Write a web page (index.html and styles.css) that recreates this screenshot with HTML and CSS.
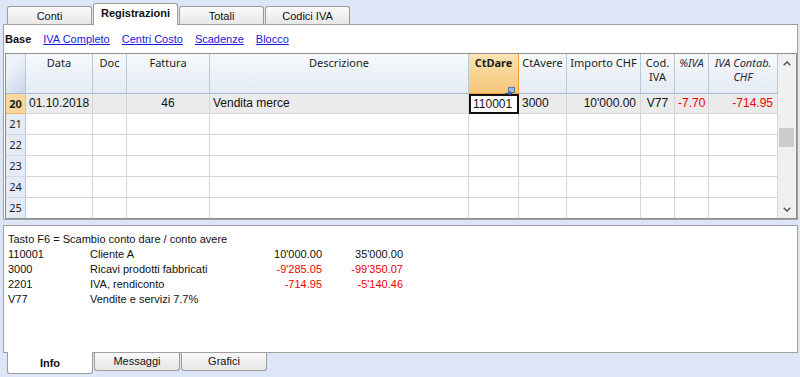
FILE: index.html
```html
<!DOCTYPE html>
<html>
<head>
<meta charset="utf-8">
<link rel="stylesheet" href="styles.css">
</head>
<body>
<div class="tabs-top">
  <div class="tab">Conti</div>
  <div class="tab active">Registrazioni</div>
  <div class="tab">Totali</div>
  <div class="tab">Codici IVA</div>
</div>
<div class="panel main">
  <div class="views">
    <b>Base</b>
    <a>IVA Completo</a>
    <a>Centri Costo</a>
    <a>Scadenze</a>
    <a>Blocco</a>
  </div>
  <div class="grid">
    <div class="table">
      <div class="r hr">
        <div class="corner"></div>
        <div>Data</div>
        <div>Doc</div>
        <div>Fattura</div>
        <div>Descrizione</div>
        <div class="sel">CtDare<svg class="mini" width="10" height="8" viewBox="0 0 10 8"><rect x="3.5" y="0.5" width="6" height="5" fill="#9fb6d6" stroke="#5a7aa8"/><path d="M0 6.5H6" stroke="#3b5f95" stroke-width="1.2"/><path d="M4 4.5L6.5 6.5L4 8" fill="none" stroke="#3b5f95" stroke-width="1.2"/></svg></div>
        <div>CtAvere</div>
        <div>Importo CHF</div>
        <div>Cod.<br>IVA</div>
        <div class="it">%IVA</div>
        <div class="it">IVA Contab.<br>CHF</div>
      </div>
      <div class="r br cur-row">
        <div class="rh on">20</div>
        <div>01.10.2018</div>
        <div></div>
        <div class="c">46</div>
        <div>Vendita merce</div>
        <div class="cur">110001</div>
        <div>3000</div>
        <div class="n">10'000.00</div>
        <div class="c">V77</div>
        <div class="n red">-7.70</div>
        <div class="n red">-714.95</div>
      </div>
      <div class="r br"><div class="rh">21</div><div></div><div></div><div></div><div></div><div></div><div></div><div></div><div></div><div></div><div></div></div>
      <div class="r br"><div class="rh">22</div><div></div><div></div><div></div><div></div><div></div><div></div><div></div><div></div><div></div><div></div></div>
      <div class="r br"><div class="rh">23</div><div></div><div></div><div></div><div></div><div></div><div></div><div></div><div></div><div></div><div></div></div>
      <div class="r br"><div class="rh">24</div><div></div><div></div><div></div><div></div><div></div><div></div><div></div><div></div><div></div><div></div></div>
      <div class="r br"><div class="rh">25</div><div></div><div></div><div></div><div></div><div></div><div></div><div></div><div></div><div></div><div></div></div>
    </div>
    <div class="scroll">
      <svg class="up" width="8" height="5" viewBox="0 0 8 5"><path d="M0.7 4.3L4 1L7.3 4.3" fill="none" stroke="#5a5a5a" stroke-width="1.6"/></svg>
      <div class="thumb"></div>
      <svg class="down" width="8" height="5" viewBox="0 0 8 5"><path d="M0.7 0.7L4 4L7.3 0.7" fill="none" stroke="#5a5a5a" stroke-width="1.6"/></svg>
    </div>
  </div>
</div>
<div class="panel info">
  <div class="full">Tasto F6 = Scambio conto dare / conto avere</div>
  <div class="ln"><span>110001</span><span>Cliente A</span><span class="n">10'000.00</span><span class="n">35'000.00</span></div>
  <div class="ln"><span>3000</span><span>Ricavi prodotti fabbricati</span><span class="n red">-9'285.05</span><span class="n red">-99'350.07</span></div>
  <div class="ln"><span>2201</span><span>IVA, rendiconto</span><span class="n red">-714.95</span><span class="n red">-5'140.46</span></div>
  <div class="ln"><span>V77</span><span>Vendite e servizi 7.7%</span><span></span><span></span></div>
</div>
<div class="tabs-bottom">
  <div class="btab active">Info</div>
  <div class="btab">Messaggi</div>
  <div class="btab">Grafici</div>
</div>
</body>
</html>
```

FILE: styles.css
```css
* { box-sizing: border-box; }
body {
  margin: 0;
  width: 800px;
  height: 377px;
  overflow: hidden;
  background: #dce6f7;
  font-family: "Liberation Sans", Arial, sans-serif;
  font-size: 11px;
  color: #111;
}
.tabs-top {
  display: flex;
  gap: 1px;
  height: 24px;
  padding-left: 7px;
  align-items: flex-end;
  position: relative;
  z-index: 2;
}
.tab {
  width: 85px;
  height: 18px;
  border: 1px solid #9c9c9c;
  border-bottom: none;
  border-radius: 3px 3px 0 0;
  background: linear-gradient(#fafafa, #e7e7e7);
  display: flex;
  align-items: center;
  justify-content: center;
  padding-top: 1px;
}
.tab.active {
  height: 22px;
  margin-bottom: -1px;
  background: #fff;
  font-weight: bold;
  padding-top: 0;
  padding-bottom: 3px;
}
.panel {
  margin: 0 2px 0 3px;
  border: 1px solid #a0a0a0;
  background: #fff;
}
.main { height: 196px; }
.views {
  height: 28px;
  display: flex;
  align-items: center;
  gap: 12px;
  padding-left: 1px;
}
.views b { font-weight: bold; color: #111; }
.views a { color: #1818e0; text-decoration: underline; }
.grid {
  margin-left: 1px;
  width: 792px;
  height: 166px;
  border: 1px solid #8e8e8e;
  display: flex;
  overflow: hidden;
}
.table { width: 772px; }
.r {
  display: grid;
  grid-template-columns: 20px 67px 34px 83px 259px 50px 48px 74px 34px 34px 69px;
}
.r > div {
  border-right: 1px solid #d6d6d6;
  border-bottom: 1px solid #d6d6d6;
}
.hr { height: 40px; }
.hr > div {
  background: linear-gradient(#f7f9fc, #e4ebf4);
  border-right-color: #b8c9dc;
  border-bottom-color: #a9bbd1;
  text-align: center;
  font-family: "Noto Sans", sans-serif;
  font-size: 11px;
  line-height: 14px;
  padding-top: 2px;
  color: #1c1c1c;
}
.hr > div.corner {
  background: linear-gradient(135deg, #edf2f9 35%, #c6d5e9);
}
.hr > div.sel {
  background: linear-gradient(#fbe3b3, #f5c677);
  border-right-color: #f19a38;
  border-bottom-color: #f19a38;
  font-weight: bold;
  position: relative;
}
.mini { position: absolute; right: 3px; bottom: -2px; }
.hr > div.it { font-style: italic; color: #2a2a3a; }
.br { height: 21px; }
.br > div {
  font-size: 12px;
  line-height: 20px;
  padding: 0 3px;
  white-space: nowrap;
  overflow: hidden;
}
.cur-row { height: 20px; background: #ebebeb; }
.cur-row > div { line-height: 19px; }
.br > .rh {
  background: #e3ebf7;
  border-right-color: #b7c9df;
  font-family: "Noto Sans", sans-serif;
  font-size: 11px;
  padding: 0;
  text-align: center;
  color: #222;
}
.br > .rh.on {
  background: #fad89d;
  border-bottom-color: #f2b45c;
  font-weight: bold;
}
.br > .cur {
  background: #fff;
  border: 2px solid #111;
  padding-left: 2px;
  line-height: 16px;
}
.c { text-align: center; }
.n { text-align: right; }
.br > .n { padding-right: 4px; }
.red { color: #f00000; }
.scroll {
  width: 18px;
  background: #f0f0f0;
  display: flex;
  flex-direction: column;
}
.up { margin: 7px 0 0 5px; }
.thumb { margin: 62px 0 0 1px; width: 15px; height: 19px; background: #cdcdcd; }
.down { margin: 60px 0 0 5px; }
.info {
  margin-top: 5px;
  height: 128px;
  padding: 6px 0 0 4px;
  line-height: 15px;
}
.ln {
  display: grid;
  grid-template-columns: 82px 150px 82px 81px;
}
.tabs-bottom {
  display: flex;
  gap: 1px;
  padding-left: 7px;
  align-items: flex-start;
}
.btab {
  width: 86px;
  height: 18px;
  border: 1px solid #9c9c9c;
  border-top: none;
  border-radius: 0 0 3px 3px;
  background: linear-gradient(#f9f9f9, #e6e6e6);
  text-align: center;
  line-height: 17px;
}
.btab.active {
  height: 22px;
  margin-top: -1px;
  background: #fff;
  font-weight: bold;
  line-height: 21px;
  padding-top: 1px;
}
```
